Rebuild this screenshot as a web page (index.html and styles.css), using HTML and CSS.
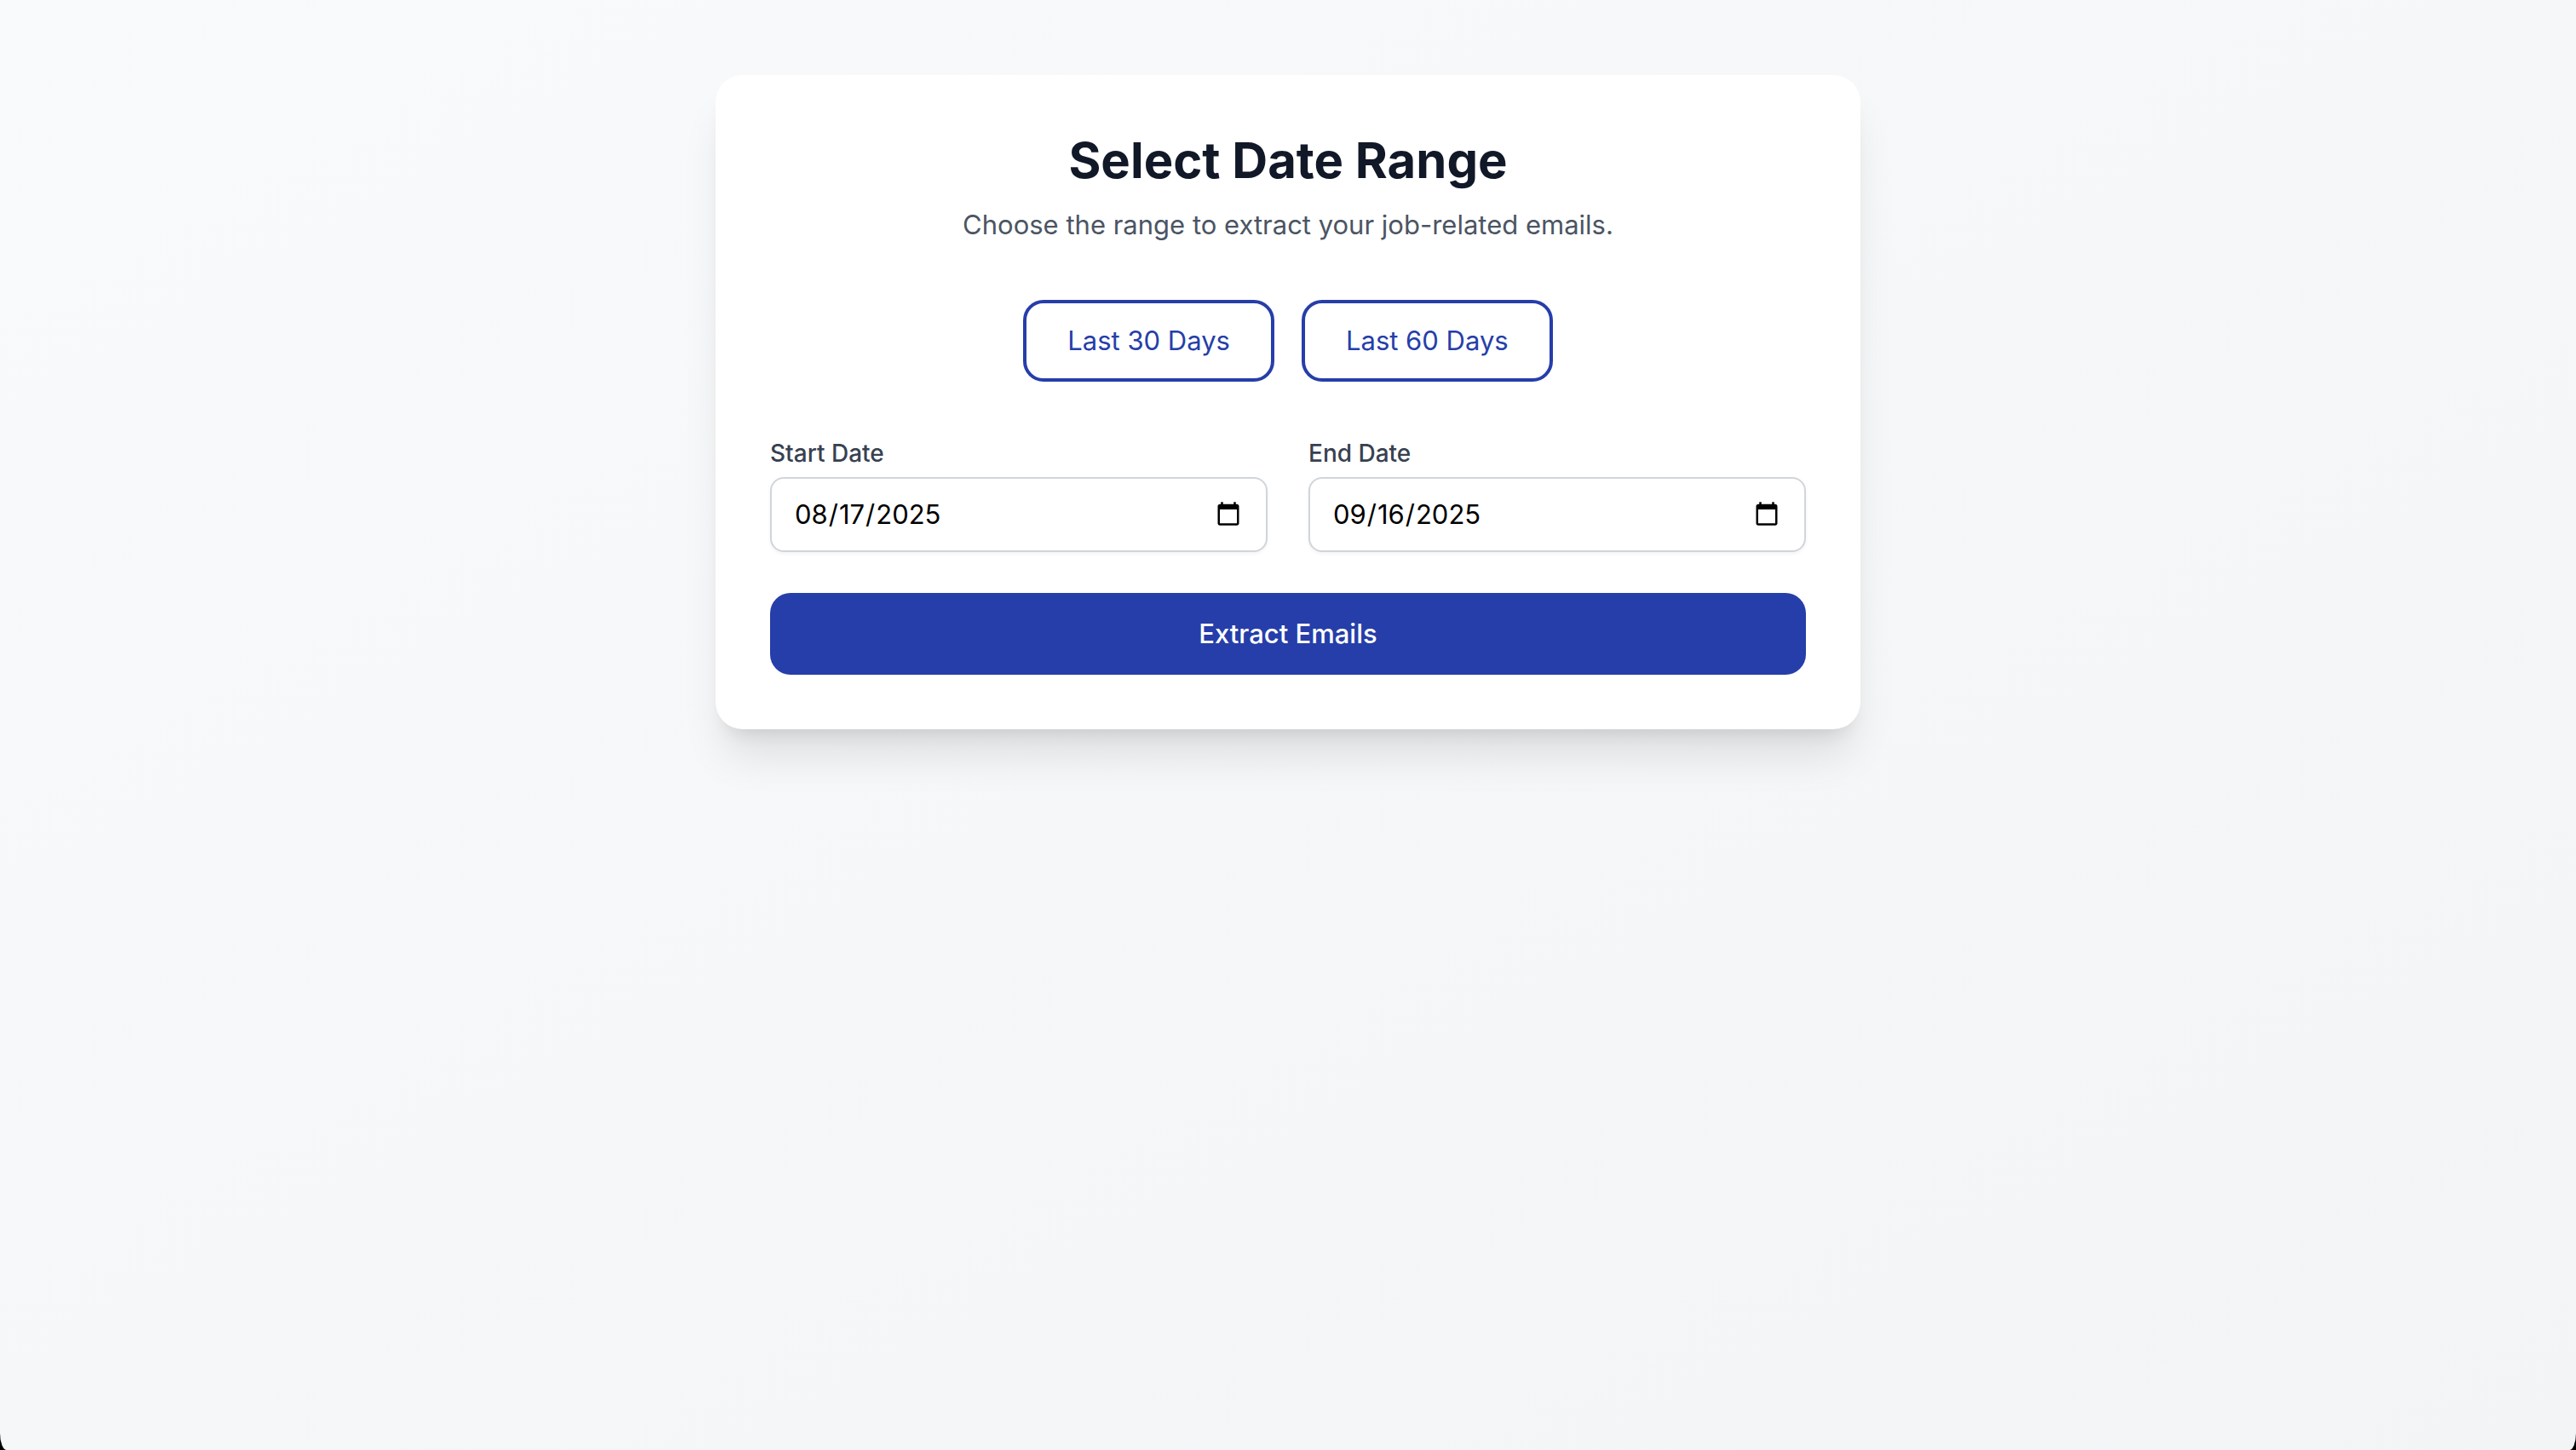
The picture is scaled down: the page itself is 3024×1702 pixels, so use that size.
FILE: index.html
```html
<!DOCTYPE html>
<html lang="en-US">
<head>
<meta charset="utf-8">
<meta name="viewport" content="width=device-width, initial-scale=1">
<title>Select Date Range</title>
<link rel="stylesheet" href="styles.css">
</head>
<body>
<main class="page">
  <section class="card">
    <header class="card-header">
      <h1 class="title">Select Date Range</h1>
      <p class="subtitle">Choose the range to extract your job-related emails.</p>
    </header>
    <div class="presets">
      <button type="button" class="button button-outline">Last 30 Days</button>
      <button type="button" class="button button-outline">Last 60 Days</button>
    </div>
    <form class="form">
      <div class="fields">
        <div class="field">
          <label class="label" for="start-date">Start Date</label>
          <input class="date-input" id="start-date" type="date" value="2025-08-17">
        </div>
        <div class="field">
          <label class="label" for="end-date">End Date</label>
          <input class="date-input" id="end-date" type="date" value="2025-09-16">
        </div>
      </div>
      <button type="submit" class="button button-primary">Extract Emails</button>
    </form>
  </section>
</main>
</body>
</html>
```
FILE: styles.css
```css
*, *::before, *::after { box-sizing: border-box; }

html { background: #000; }

body {
  margin: 0;
  font-family: Inter, "Liberation Sans", sans-serif;
  font-size: 31px;
  line-height: 48px;
}

h1, p { margin: 0; }

.page {
  min-height: 100vh;
  padding: 88px 32px;
  background: linear-gradient(to bottom right, #f9fafb, #f3f4f6);
  border-radius: 0 0 8px 8px / 0 0 20px 20px;
}

.card {
  max-width: 1344px;
  margin: 0 auto;
  padding: 64px;
  background: #fff;
  border-radius: 32px;
  box-shadow: 0 40px 50px -10px rgba(0, 0, 0, 0.1), 0 16px 20px -12px rgba(0, 0, 0, 0.1);
}

.card-header {
  display: flex;
  flex-direction: column;
  gap: 16px;
  margin-bottom: 64px;
  text-align: center;
}

.title {
  color: #111827;
  font-size: 58px;
  font-weight: 700;
  line-height: 72px;
}

.subtitle { color: #4b5563; }

.presets {
  display: flex;
  flex-wrap: wrap;
  justify-content: center;
  gap: 32px;
  margin-bottom: 64px;
}

.button {
  padding: 24px 48px;
  border: 0;
  border-radius: 24px;
  font: inherit;
  cursor: pointer;
}

.button-outline {
  padding: 20px 48px;
  border: 4px solid #263ea9;
  background: #fff;
  color: #263ea9;
}

.button-primary {
  background: #263ea9;
  color: #fff;
  font-weight: 500;
}

.form {
  display: flex;
  flex-direction: column;
  gap: 48px;
}

.fields {
  display: grid;
  grid-template-columns: repeat(2, minmax(0, 1fr));
  gap: 48px;
}

.field {
  display: flex;
  flex-direction: column;
  gap: 8px;
}

.label {
  color: #374151;
  font-size: 28px;
  font-weight: 500;
  line-height: 40px;
}

.date-input {
  width: 100%;
  height: 88px;
  padding: 16px 26px;
  border: 2px solid #d1d5db;
  border-radius: 16px;
  background: #fff;
  box-shadow: 0 2px 4px rgba(0, 0, 0, 0.05);
  color: #000;
  font: inherit;
}

.date-input::-webkit-calendar-picker-indicator {
  width: 32px;
  height: 32px;
}
```
